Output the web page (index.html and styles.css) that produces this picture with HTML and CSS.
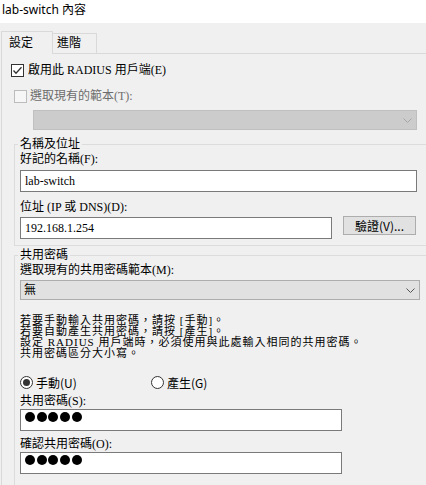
FILE: index.html
```html
<!DOCTYPE html>
<html lang="zh-Hant">
<head>
<meta charset="utf-8">
<title>lab-switch 內容</title>
<link rel="stylesheet" href="styles.css">
</head>
<body>
<div class="titlebar">lab-switch 內容</div>
<div class="dialog">
  <div class="tabs">
    <div class="tab tab-active">設定</div>
    <div class="tab tab-plain">進階</div>
  </div>
  <div class="pane">
    <div class="check-row row-enable">
      <span class="checkbox"><svg width="11" height="11" viewBox="0 0 11 11"><polyline points="1.5,5.5 4,8.2 9.5,2.2" fill="none" stroke="#333" stroke-width="1.3"/></svg></span>
      <span class="check-text">啟用此 RADIUS 用戶端(E)</span>
    </div>
    <div class="check-row row-template">
      <span class="checkbox checkbox-disabled"></span>
      <span class="check-text text-disabled">選取現有的範本(T):</span>
    </div>
    <div class="combo combo-disabled">
      <span class="combo-text"></span>
      <svg class="chev" width="9" height="5" viewBox="0 0 9 5"><polyline points="0.5,0.5 4.5,4.5 8.5,0.5" fill="none" stroke="#a6a6a6" stroke-width="1"/></svg>
    </div>

    <fieldset class="group group-name">
      <legend>名稱及位址</legend>
      <div class="label label-first">好記的名稱(F):</div>
      <div class="input input-name">lab-switch</div>
      <div class="label label-addr">位址 (IP 或 DNS)(D):</div>
      <div class="addr-row">
        <div class="input input-addr">192.168.1.254</div>
        <div class="button">驗證(V)...</div>
      </div>
    </fieldset>

    <fieldset class="group group-secret">
      <legend>共用密碼</legend>
      <div class="label label-first">選取現有的共用密碼範本(M):</div>
      <div class="combo combo-secret">
        <span class="combo-text">無</span>
        <svg class="chev" width="9" height="5" viewBox="0 0 9 5"><polyline points="0.5,0.5 4.5,4.5 8.5,0.5" fill="none" stroke="#555" stroke-width="1"/></svg>
      </div>
      <div class="desc">
        <div class="desc-line">若要手動輸入共用密碼，請按 [手動]。</div>
        <div class="desc-line">若要自動產生共用密碼，請按 [產生]。</div>
        <div class="desc-line">設定 RADIUS 用戶端時，必須使用與此處輸入相同的共用密碼。</div>
        <div class="desc-line">共用密碼區分大小寫。</div>
      </div>
      <div class="radio-row">
        <div class="radio-item radio-first"><span class="radio radio-on"><span class="radio-dot"></span></span><span class="radio-text">手動(U)</span></div>
        <div class="radio-item"><span class="radio"></span><span class="radio-text">產生(G)</span></div>
      </div>
      <div class="label label-secret">共用密碼(S):</div>
      <div class="input input-secret"><span class="dot"></span><span class="dot"></span><span class="dot"></span><span class="dot"></span><span class="dot"></span></div>
      <div class="label label-confirm">確認共用密碼(O):</div>
      <div class="input input-secret"><span class="dot"></span><span class="dot"></span><span class="dot"></span><span class="dot"></span><span class="dot"></span></div>
    </fieldset>
  </div>
</div>
</body>
</html>
```

FILE: styles.css
```css
* { box-sizing: border-box; }
html, body { margin: 0; padding: 0; }
body {
  width: 426px;
  height: 485px;
  overflow: hidden;
  background: #f0f0f0;
  color: #000;
  font-family: "Liberation Serif", "Noto Sans CJK TC", serif;
  font-size: 12px;
}

.titlebar {
  height: 23px;
  background: #fff;
  padding-left: 2px;
  font-family: "Noto Sans", "Noto Sans CJK TC", sans-serif;
  font-size: 12px;
  line-height: 20px;
}

.dialog { padding-top: 8px; }

.tabs {
  display: flex;
  align-items: flex-end;
  height: 22px;
  padding-left: 1px;
}
.tab {
  font-family: "Noto Sans CJK TC", sans-serif;
  font-size: 12px;
  line-height: 12px;
  border: 1px solid #d9d9d9;
  border-bottom: none;
  background: #f0f0f0;
}
.tab-active {
  position: relative;
  z-index: 2;
  width: 52px;
  height: 23px;
  margin-bottom: -1px;
  padding: 4px 0 0 7px;
}
.tab-plain {
  width: 44px;
  height: 20px;
  border-left: none;
  padding: 2px 0 0 4px;
}

.pane {
  margin-left: 1px;
  border-top: 1px solid #d9d9d9;
  border-left: 1px solid #d9d9d9;
  height: 440px;
}

.check-row {
  display: flex;
  align-items: center;
  height: 13px;
  line-height: 13px;
}
.row-enable { margin: 10px 0 0 9px; }
.row-template { margin: 13px 0 0 12px; }
.checkbox {
  width: 13px;
  height: 13px;
  border: 1px solid #333;
  background: #fff;
  display: flex;
  align-items: center;
  justify-content: center;
}
.checkbox-disabled { border-color: #bcbcbc; background: #f6f6f6; }
.row-enable .check-text { margin-left: 4px; }
.row-template .check-text { margin-left: 3px; }
.text-disabled { color: #6d6d6d; }

.combo {
  display: flex;
  align-items: center;
  justify-content: space-between;
  height: 20px;
  padding: 0 4px 0 3px;
  border: 1px solid #adadad;
  background: #e1e1e1;
  line-height: 18px;
}
.combo-disabled {
  margin: 7px 0 0 31px;
  width: 384px;
  background: #cccccc;
  border-color: #bfbfbf;
}
.combo-secret {
  margin-top: 3px;
  width: 400px;
}
.chev { display: block; }

.group {
  margin: 0 0 0 12px;
  width: 420px;
  min-width: 0;
  border: 1px solid #dcdcdc;
  padding: 0 0 6px 5px;
}
.group legend {
  margin-left: -2px;
  padding: 0 2px;
  font-size: 12px;
  line-height: 14px;
}
.group-name { margin-top: 7px; }
.group-secret { margin-top: 2px; padding-bottom: 20px; }

.label { line-height: 14px; }
.label-first { margin-top: 1px; }
.label-addr { margin-top: 8px; }
.label-secret { margin-top: 5px; }
.label-confirm { margin-top: 6px; }

.input {
  height: 22px;
  border: 1px solid #7a7a7a;
  background: #fff;
  padding-left: 4px;
  line-height: 20px;
}
.input-name { margin-top: 4px; width: 397px; }

.addr-row {
  display: flex;
  align-items: flex-start;
  margin-top: 2px;
}
.input-addr { margin-top: 1px; width: 312px; }
.button {
  margin-left: 11px;
  width: 73px;
  height: 19px;
  border: 1px solid #adadad;
  background: #e1e1e1;
  text-align: center;
  line-height: 17px;
  font-family: "Noto Sans CJK TC", sans-serif;
}

.desc {
  margin-top: 15px;
}
.desc-line {
  height: 11px;
  font-size: 11px;
  line-height: 11px;
  letter-spacing: 1px;
  white-space: nowrap;
}

.radio-row {
  display: flex;
  margin-top: 17px;
  height: 13px;
}
.radio-item {
  display: flex;
  align-items: center;
  height: 13px;
  line-height: 13px;
}
.radio-first { width: 131px; }
.radio {
  width: 13px;
  height: 13px;
  border: 1px solid #333;
  border-radius: 50%;
  background: #fff;
  display: flex;
  align-items: center;
  justify-content: center;
}
.radio-dot {
  width: 7px;
  height: 7px;
  border-radius: 50%;
  background: #333;
}
.radio-text { margin-left: 3px; font-family: "Noto Sans CJK TC", sans-serif; }

.input-secret {
  margin-top: 1px;
  width: 322px;
  display: flex;
  align-items: flex-start;
  gap: 1.67px;
  padding-top: 2px;
}
.dot {
  width: 10px;
  height: 10px;
  border-radius: 50%;
  background: #000;
}
```
